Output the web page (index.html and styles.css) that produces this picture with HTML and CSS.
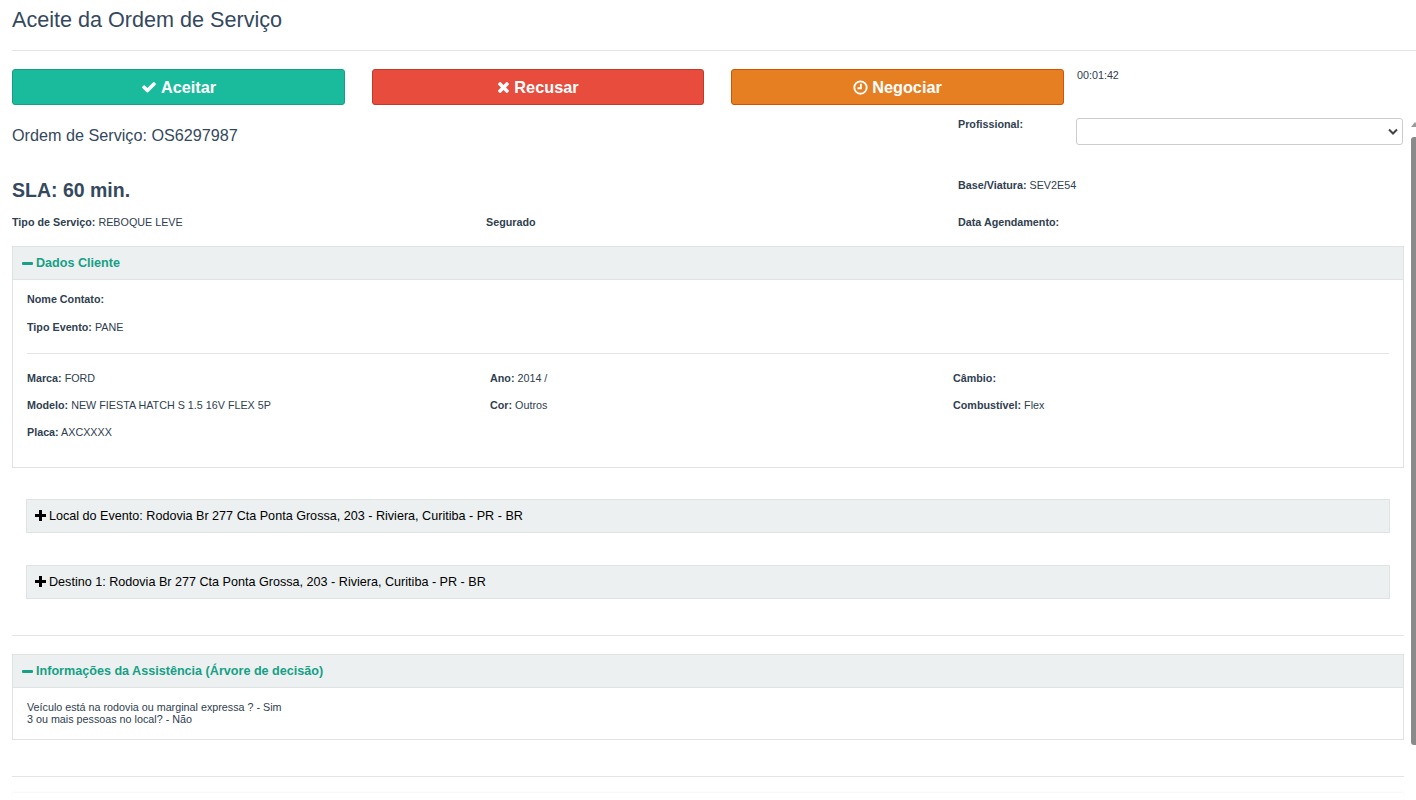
FILE: index.html
```html
<!DOCTYPE html>
<html lang="pt-BR">
<head>
<meta charset="utf-8">
<title>Aceite da Ordem de Serviço</title>
<link rel="stylesheet" href="styles.css">
</head>
<body>
<div class="page">
  <header class="title-bar"><h1>Aceite da Ordem de Serviço</h1></header>
  <div class="content">
    <div class="actions">
      <button class="btn btn-green"><svg class="ico" viewBox="0 0 1792 1792"><path d="M1671 566q0 40-28 68l-724 724-136 136q-28 28-68 28t-68-28l-136-136-362-362q-28-28-28-68t28-68l136-136q28-28 68-28t68 28l294 295 656-657q28-28 68-28t68 28l136 136q28 28 28 68z"/></svg> Aceitar</button>
      <button class="btn btn-red"><svg class="ico ico-x" viewBox="0 256 1408 1408"><path d="M1298 1322q0 40-28 68l-136 136q-28 28-68 28t-68-28l-294-294-294 294q-28 28-68 28t-68-28l-136-136q-28-28-28-68t28-68l294-294-294-294q-28-28-28-68t28-68l136-136q28-28 68-28t68 28l294 294 294-294q28-28 68-28t68 28l136 136q28 28 28 68t-28 68l-294 294 294 294q28 28 28 68z"/></svg> Recusar</button>
      <button class="btn btn-orange"><svg class="ico ico-clock" viewBox="0 0 16 16"><circle cx="8" cy="8" r="6.6"/><path d="M8.4 4v4.8H4.8"/></svg> Negociar</button>
      <div class="timer">00:01:42</div>
    </div>
    <div class="summary">
      <div class="summary-left">
        <h2 class="os">Ordem de Serviço: OS6297987</h2>
        <h3 class="sla">SLA: 60 min.</h3>
      </div>
      <div class="summary-right">
        <div class="prof-row">
          <b class="prof-label">Profissional:</b>
          <div class="prof-select"><svg class="chev" viewBox="0 0 10 7"><path d="M1 1.5l4 4 4-4"/></svg></div>
        </div>
        <div class="base"><b>Base/Viatura:</b> SEV2E54</div>
      </div>
    </div>
    <div class="info-row">
      <div><b>Tipo de Serviço:</b> REBOQUE LEVE</div>
      <div><b>Segurado</b></div>
      <div><b>Data Agendamento:</b></div>
    </div>

    <section class="panel panel-client">
      <div class="panel-head green"><span class="minus"></span>Dados Cliente</div>
      <div class="panel-body">
        <p class="line"><b>Nome Contato:</b></p>
        <p class="line"><b>Tipo Evento:</b> PANE</p>
        <hr class="rule inner">
        <div class="vehicle">
          <div><b>Marca:</b> FORD</div><div><b>Ano:</b> 2014 /</div><div><b>Câmbio:</b></div>
          <div><b>Modelo:</b> NEW FIESTA HATCH S 1.5 16V FLEX 5P</div><div><b>Cor:</b> Outros</div><div><b>Combustível:</b> Flex</div>
          <div><b>Placa:</b> AXCXXXX</div>
        </div>
      </div>
    </section>

    <div class="addr"><span class="plus"></span>Local do Evento: Rodovia Br 277 Cta Ponta Grossa, 203 - Riviera, Curitiba - PR - BR</div>
    <div class="addr"><span class="plus"></span>Destino 1: Rodovia Br 277 Cta Ponta Grossa, 203 - Riviera, Curitiba - PR - BR</div>

    <hr class="rule sep-a">

    <section class="panel">
      <div class="panel-head green"><span class="minus"></span>Informações da Assistência (Árvore de decisão)</div>
      <div class="panel-body tree">
        Veículo está na rodovia ou marginal expressa ? - Sim<br>
        3 ou mais pessoas no local? - Não
      </div>
    </section>

    <hr class="rule sep-b">
    <div class="next-card"></div>
  </div>
</div>
<div class="scrollbar"><span class="arrow"></span><span class="thumb"></span></div>
</body>
</html>
```

FILE: styles.css
```css
* { box-sizing: border-box; }
html, body { margin: 0; height: 800px; overflow: hidden; background: #fff; }
body {
  font-family: "Liberation Sans", Arial, sans-serif;
  font-size: 10.75px;
  line-height: 1.3;
  color: #2f4050;
  position: relative;
}
b { font-weight: 700; }

.title-bar { margin-left: 12px; height: 51px; border-bottom: 1px solid #e2e4e6; }
h1 { margin: 0; padding-top: 7px; font-size: 21.6px; line-height: 26px; font-weight: 400; color: #34495e; }

.content { width: 1392px; margin-left: 12px; }

.actions { display: grid; grid-template-columns: 333px 332px 333px 1fr; column-gap: 27px; margin-top: 18px; height: 36px; }
.btn {
  height: 36px; border: 1px solid; border-radius: 3px; color: #fff;
  font: 700 16.3px/1 "Liberation Sans", Arial, sans-serif; padding: 0;
  display: flex; align-items: center; justify-content: center; gap: 4px;
}
.btn-green { background: #1abb9c; border-color: #169f85; }
.btn-red { background: #e74c3c; border-color: #c0392b; }
.btn-orange { background: #e67e22; border-color: #d35400; }
.ico { width: 16px; height: 16px; fill: #fff; }
.ico-x { width: 13px; height: 13px; }
.ico-clock { width: 15px; height: 15px; fill: none; stroke: #fff; stroke-width: 2; }
.timer { margin-left: -14px; font-size: 10.75px; line-height: 12px; }

.summary { display: grid; grid-template-columns: 946px 1fr; height: 99px; }
.os { margin: 20px 0 0; font-size: 16.2px; line-height: 20px; font-weight: 400; color: #34495e; }
.sla { margin: 34px 0 0; font-size: 19.5px; line-height: 22px; font-weight: 700; color: #34495e; }
.prof-row { display: flex; margin-top: 13px; height: 27px; }
.prof-label { width: 118px; }
.prof-select {
  width: 327px; height: 27px; background: #fff; border: 1px solid #ccc; border-radius: 3px;
  display: flex; align-items: center; justify-content: flex-end; padding-right: 4px;
}
.chev { width: 10px; height: 7px; fill: none; stroke: #444; stroke-width: 2; }
.base { margin-top: 34px; }

.info-row { display: grid; grid-template-columns: 474px 472px 1fr; height: 42px; padding-top: 12px; }

.panel { border: 1px solid #e0e2e4; }
.panel-client { height: 222px; }
.panel-head { height: 33px; background: #ecf0f1; border-bottom: 1px solid #dfe3e4; padding-left: 9px; display: flex; align-items: center; font-size: 12.6px; font-weight: 700; }
.green { color: #16a085; }
.minus { width: 11px; height: 3px; background: #16a085; border-radius: 1px; margin-right: 3px; }
.panel-body { padding: 12px 14px 0; }
.line { margin: 0 0 14px; height: 14px; line-height: 14px; }
.rule { border: 0; border-top: 1px solid #e2e4e6; margin: 0; }
.inner { margin-top: 19px; }
.vehicle { display: grid; grid-template-columns: 463px 463px 1fr; grid-auto-rows: 27px; padding-top: 17px; line-height: 14px; }

.addr {
  height: 34px; margin: 31px 14px 0; background: #ecf0f1; border: 1px solid #dfe3e4; padding-left: 8px;
  display: flex; align-items: center; font-size: 12.6px; color: #000;
}
.addr + .addr { margin-top: 32px; }
.plus { width: 11px; height: 11px; margin: -1px 3px 0 0; flex: none; background:
  linear-gradient(#000,#000) center/11px 3px no-repeat,
  linear-gradient(#000,#000) center/3px 11px no-repeat; }

.sep-a { margin-top: 36px; margin-bottom: 18px; }
.tree { padding: 13px 14px 14px; line-height: 12px; }
.sep-b { margin-top: 36px; }
.next-card { height: 10px; margin-top: 16px; box-shadow: 0 -1px 2px rgba(0,0,0,.04); border-radius: 2px; }

.scrollbar { position: absolute; left: 1408px; top: 118px; width: 8px; height: 640px; }
.arrow { position: absolute; left: 3px; top: 4px; width: 0; height: 0; border-left: 4px solid transparent; border-right: 4px solid transparent; border-bottom: 5px solid #9a9a9a; }
.thumb { position: absolute; left: 3px; top: 19px; width: 5px; height: 608px; background: #8a8a8a; border-radius: 3px 0 0 3px; }
```
